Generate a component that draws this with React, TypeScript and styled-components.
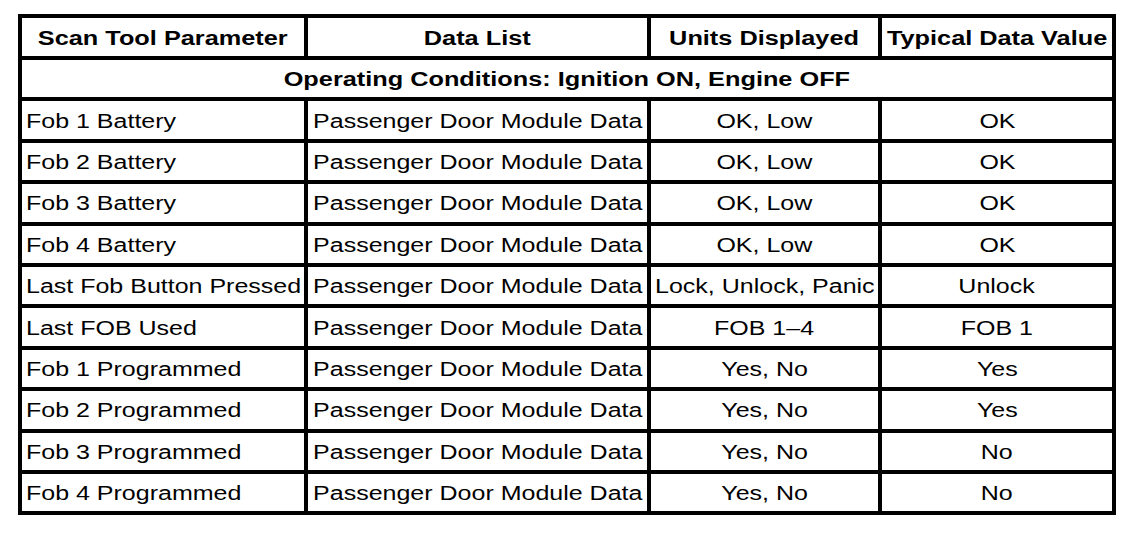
import { Fragment } from "react";
import styled, { createGlobalStyle } from "styled-components";

const GlobalStyle = createGlobalStyle`
    html, body {
        margin: 0;
        padding: 0;
        background: #fff;
    }
    body {
        font-family: "Liberation Sans", Arial, sans-serif;
        color: #000;
    }
`;

const Page = styled.div`
    padding: 14px 0 0 18px;
`;

const Grid = styled.div`
    display: inline-grid;
    grid-template-columns: 282px 339px 227px 230px;
    grid-template-rows: 38px repeat(11, 37.4px);
    gap: 4px;
    background: #000;
    border: 4px solid #000;
`;

const Cell = styled.div<{ $align?: "left" | "center"; $span?: boolean }>`
    background: #fff;
    display: flex;
    align-items: center;
    justify-content: ${(p) => (p.$align === "left" ? "flex-start" : "center")};
    padding: ${(p) => (p.$align === "left" ? "1px 0 0 4px" : "1px 0 0 0")};
    grid-column: ${(p) => (p.$span ? "1 / -1" : "auto")};
    white-space: nowrap;
`;

// the source text is wider than Arial, so stretch it sideways
const Text = styled.span<{ $bold?: boolean; $origin?: "left" | "center" }>`
    display: inline-block;
    font-size: 20px;
    font-weight: ${(p) => (p.$bold ? 700 : 400)};
    transform: scaleX(${(p) => (p.$bold ? 1.265 : 1.25)});
    transform-origin: ${(p) => (p.$origin === "left" ? "left center" : "center")};
    line-height: 1;
`;

const headers = [
    "Scan Tool Parameter",
    "Data List",
    "Units Displayed",
    "Typical Data Value",
];

const rows = [
    { id: 1, param: "Fob 1 Battery", units: "OK, Low", value: "OK" },
    { id: 2, param: "Fob 2 Battery", units: "OK, Low", value: "OK" },
    { id: 3, param: "Fob 3 Battery", units: "OK, Low", value: "OK" },
    { id: 4, param: "Fob 4 Battery", units: "OK, Low", value: "OK" },
    { id: 5, param: "Last Fob Button Pressed", units: "Lock, Unlock, Panic", value: "Unlock" },
    { id: 6, param: "Last FOB Used", units: "FOB 1\u20134", value: "FOB 1" },
    { id: 7, param: "Fob 1 Programmed", units: "Yes, No", value: "Yes" },
    { id: 8, param: "Fob 2 Programmed", units: "Yes, No", value: "Yes" },
    { id: 9, param: "Fob 3 Programmed", units: "Yes, No", value: "No" },
    { id: 10, param: "Fob 4 Programmed", units: "Yes, No", value: "No" },
];

export default function App() {
    return (
        <Page>
            <GlobalStyle />
            <Grid>
                {headers.map((h) => (
                    <Cell key={h}>
                        <Text $bold>{h}</Text>
                    </Cell>
                ))}

                <Cell $span>
                    <Text $bold>Operating Conditions: Ignition ON, Engine OFF</Text>
                </Cell>

                {rows.map(({ id, param, units, value }) => (
                    <Fragment key={id}>
                        <Cell $align="left">
                            <Text $origin="left">{param}</Text>
                        </Cell>
                        <Cell>
                            <Text>Passenger Door Module Data</Text>
                        </Cell>
                        <Cell>
                            <Text>{units}</Text>
                        </Cell>
                        <Cell>
                            <Text>{value}</Text>
                        </Cell>
                    </Fragment>
                ))}
            </Grid>
        </Page>
    );
}
